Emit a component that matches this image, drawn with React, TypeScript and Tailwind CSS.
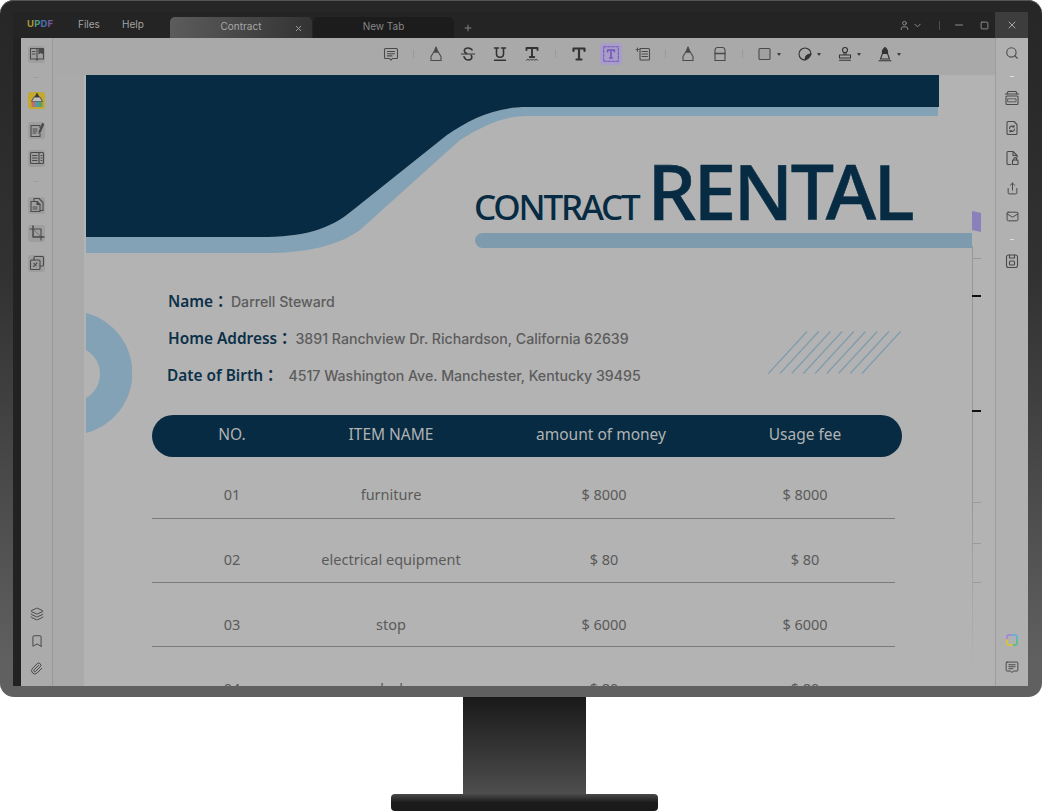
import React from 'react';
import { X, Plus, Minus, Square, ChevronDown, User, Search, Layers, Bookmark, Paperclip, Share, Mail } from 'lucide-react';

const INK = '#4a4a4a';
const DARK = '#333333';

// tiny stroke icon wrapper so all the toolbar glyphs share the same box
const Ico: React.FC<{ children: React.ReactNode; size?: number; color?: string }> = ({ children, size = 16, color = INK }) => (
    <svg width={size} height={size} viewBox="0 0 16 16" fill="none" stroke={color} strokeWidth={1.1} strokeLinecap="round" strokeLinejoin="round">
        {children}
    </svg>
);

const CommentIcon = () => (
    <Ico>
        <path d="M2.500 2.500h11a1 1 0 0 1 1 1v8a1 1 0 0 1-1 1H9.500L8 14.200 6.500 12.500h-4a1 1 0 0 1-1-1v-8a1 1 0 0 1 1-1z" />
        <path d="M4.500 5.500h7M4.500 7.700h7M4.500 9.900h4.500" />
    </Ico>
);
const MarkerIcon = () => (
    <Ico>
        <path d="M3 14.500v-4L5.800 6h4.400L13 10.500v4z" />
        <path d="M6 6l2-5 2 5z" fill={INK} />
    </Ico>
);
const StrikeIcon = () => (
    <Ico color={DARK}>
        <path d="M12 3.800C11 2.600 9.600 2 8 2 6 2 4.300 3 4.300 4.800c0 1.200.8 2 2.200 2.600M4 10.800C4.800 12.800 6.300 14 8.200 14c2 0 3.600-1.100 3.600-3 0-.6-.2-1.200-.5-1.600" strokeWidth={1.600} />
        <path d="M1.500 8h13" strokeWidth={1.200} />
    </Ico>
);
const UnderlineIcon = () => (
    <Ico color={DARK}>
        <path d="M2.500 2h4M9.500 2h4M4.500 2v6c0 2.200 1.400 3.300 3.500 3.300s3.500-1.100 3.500-3.300V2" strokeWidth={1.600} />
        <path d="M2.500 14.300h11" strokeWidth={1.400} />
    </Ico>
);
const SquiggleTIcon = () => (
    <Ico color={DARK}>
        <path d="M2.500 4V2h11v2M8 2v9M5.800 11h4.400" strokeWidth={1.900} />
        <path d="M2.500 14.200l1.400-.9 1.400.9 1.400-.9 1.300.9 1.400-.9 1.400.9 1.400-.9 1.300.9" strokeWidth={0.9} />
    </Ico>
);
const TextIcon = () => (
    <Ico color={DARK}>
        <path d="M2.500 5V2.500h11V5M8 2.500v11M5.500 13.500h5" strokeWidth={2.200} />
    </Ico>
);
const TextBoxIcon = () => (
    <Ico size={18} color="#6f58b8">
        <path d="M1.500 1.500h13v13h-13z" strokeDasharray="2.400 1.200" strokeWidth={0.9} />
        <path d="M5 6V4.500h6V6M8 4.500v7M6.800 11.500h2.400" strokeWidth={1.400} />
    </Ico>
);
const CalloutIcon = () => (
    <Ico>
        <path d="M5 2.500h8.500a1 1 0 0 1 1 1v9.500a1 1 0 0 1-1 1H6a1 1 0 0 1-1-1z" />
        <path d="M7 5.500h5.500M7 8h5.500M7 10.500h5.500" />
        <path d="M1 3.500h3M2.500 2v3.500" strokeWidth={0.9} />
    </Ico>
);
const EraserIcon = () => (
    <Ico>
        <path d="M3 14.500V4.500c0-1.700 1-3 2.500-3h5c1.500 0 2.500 1.300 2.500 3v10z" />
        <path d="M3 7.500h10" strokeWidth={1.700} />
    </Ico>
);
const ShapeIcon = () => (
    <Ico>
        <rect x="2" y="2.500" width="11" height="11" rx="1" fill="#8f8f8f" fillOpacity={0.3} />
    </Ico>
);
const StickerIcon = () => (
    <Ico color={DARK}>
        <path d="M8 14A6 6 0 1 1 14 8c-3.300 0-6 2.700-6 6z" />
        <path d="M8 14c0-3.300 2.700-6 6-6-1 3-3 5-6 6z" fill={DARK} />
    </Ico>
);
const StampIcon = () => (
    <Ico color={DARK}>
        <circle cx="8" cy="4" r="2.500" />
        <path d="M7 6.500v2M9 6.500v2M2.500 9h11v3h-11zM2.500 14.200h11" />
    </Ico>
);
const PenIcon = () => (
    <Ico color={DARK}>
        <path d="M8 1.500c-2 1.500-3 3.500-2.500 6h5c.5-2.500-.5-4.500-2.500-6z" fill={DARK} />
        <path d="M5.500 7.500L3.500 13h9l-2-5.500M2 14.800h12" />
    </Ico>
);

// sidebar icons
const BookIcon = () => (
    <Ico>
        <path d="M1.500 2.500h13v10.500H9L8 14l-1-1H1.500z" />
        <path d="M8 2.500v10.500M3.500 5.500h2.500M3.500 8h2.500" />
        <path d="M10 2.500h3.500v5l-1.750-1.300L10 7.500z" fill={INK} />
    </Ico>
);
const HighlightIcon = () => (
    <svg width="14" height="16" viewBox="0 0 14 16" fill="none">
        <path d="M7 0.500L9.500 5h-5z" fill="#3a3a3a" />
        <path d="M4 5h6l2.500 4.500H1.500z" fill="#bdbdbd" stroke="#3a3a3a" strokeWidth={0.8} />
        <rect x="1.500" y="9.500" width="3.700" height="5.500" fill="#b96f6f" />
        <rect x="5.200" y="9.500" width="3.700" height="5.500" fill="#4f9aa8" />
        <rect x="8.900" y="9.500" width="3.600" height="5.500" fill="#5aa06a" />
    </svg>
);
const EditDocIcon = () => (
    <Ico>
        <path d="M11 5.500V3.500H2v11h9v-3" />
        <path d="M4 7h4M4 9h4M4 11h3" />
        <path d="M13.500 1.500L10.500 9l-.5 2 1.500-1.500 3-7z" fill={INK} />
    </Ico>
);
const ReaderIcon = () => (
    <Ico>
        <rect x="1.500" y="2.500" width="13" height="11" rx="1" />
        <path d="M10 2.500v11M3.500 5.500h4.500M3.500 8h4.500M3.500 10.500h4.500M12 5.500h1M12 8h1M12 10.500h1" />
    </Ico>
);
const PagesIcon = () => (
    <Ico>
        <path d="M5 3.500V1.500h5l4 4v8h-3" />
        <path d="M2 4.500h6l3 3v7H2z" />
        <path d="M8 4.500v3h3" fill={INK} />
        <path d="M4 10h4M4 12h4" />
    </Ico>
);
const CropIcon = () => (
    <Ico>
        <path d="M4 1v11h11" strokeWidth={1.500} />
        <path d="M1 4h11v11" strokeWidth={1.100} />
        <path d="M4 4l8 8" strokeWidth={0.5} />
    </Ico>
);
const StackIcon = () => (
    <Ico>
        <rect x="1.500" y="5" width="9.500" height="9.500" rx="1" />
        <path d="M5 5V2.500a1 1 0 0 1 1-1h7.500a1 1 0 0 1 1 1V10a1 1 0 0 1-1 1H11" />
        <path d="M4.500 11.500l3.500-3.500M5 8.500l2.500 2.500" strokeDasharray="1 1" />
    </Ico>
);
const OcrIcon = () => (
    <Ico>
        <path d="M3 4l1-2.500h8L13 4" />
        <path d="M1.500 4h13" />
        <rect x="2" y="6" width="12" height="8.500" rx="1" />
        <path d="M4 8.800h8v3H4z" strokeWidth={0.8} />
    </Ico>
);
const ConvertIcon = () => (
    <Ico>
        <path d="M10 1.500H4a1 1 0 0 0-1 1v11a1 1 0 0 0 1 1h8a1 1 0 0 0 1-1V4.500z" />
        <path d="M5.500 8.500A2.500 2.500 0 0 1 10 7M10.500 9A2.500 2.500 0 0 1 6 10.500M10 5.500V7H8.500M6 12v-1.500h1.500" />
    </Ico>
);
const LockDocIcon = () => (
    <Ico>
        <path d="M7 14.500H4a1 1 0 0 1-1-1v-11a1 1 0 0 1 1-1h5l4 4v2" />
        <path d="M9 1.500v4h4" />
        <rect x="8.500" y="10" width="5.500" height="4.500" rx="0.5" />
        <path d="M9.800 10V9a1.400 1.400 0 0 1 2.800 0v1" />
    </Ico>
);
const SaveIcon = () => (
    <Ico>
        <rect x="2.500" y="2" width="11" height="12.500" rx="2" />
        <path d="M5.500 2v3h5V2" />
        <rect x="5.500" y="8" width="5" height="4" rx="1" />
    </Ico>
);
const AiIcon = () => (
    <svg width="14" height="14" viewBox="0 0 14 14" fill="none" strokeWidth={2} strokeLinecap="round">
        <path d="M2 7V4a2 2 0 0 1 2-2h3" stroke="#a58ad8" />
        <path d="M7 2h3a2 2 0 0 1 2 2v3" stroke="#6ab0d8" />
        <path d="M12 7v3a2 2 0 0 1-2 2H7" stroke="#62bb8c" />
        <path d="M7 12H4a2 2 0 0 1-2-2V7" stroke="#d6c04c" />
    </svg>
);

const IconTile: React.FC<{ children: React.ReactNode; className?: string; bg?: string }> = ({ children, className = '', bg = 'bg-[#9e9e9e]' }) => (
    <div className={`w-[17px] h-[17px] my-[1.500px] rounded-[3px] flex items-center justify-center ${bg} ${className}`}>{children}</div>
);

const Slot: React.FC<{ children: React.ReactNode; className?: string }> = ({ children, className = '' }) => (
    <div className={`h-[20px] flex items-center justify-center ${className}`}>{children}</div>
);

const ToolBtn: React.FC<{ children: React.ReactNode }> = ({ children }) => (
    <div className="w-[32px] flex items-center justify-center shrink-0">{children}</div>
);
const ToolDrop: React.FC<{ children: React.ReactNode }> = ({ children }) => (
    <div className="w-[40px] pl-[8px] flex items-center shrink-0">
        {children}
        <span className="ml-[4px] w-0 h-0 border-x-[2.500px] border-x-transparent border-t-[3px] border-t-[#3f3f3f]" />
    </div>
);
const ToolSep: React.FC<{ className?: string }> = ({ className = 'w-[13px]' }) => (
    <div className={`flex justify-center shrink-0 ${className}`}>
        <div className="w-[1px] h-[8px] bg-[#9a9a9a]" />
    </div>
);

const TitleBar = () => (
    <div className="h-[26px] shrink-0 bg-[#242424] flex items-end text-[10px] font-['Inter',sans-serif]">
        <div className="w-[157px] h-full flex items-center pl-[14px] shrink-0 pb-[2px]">
            <span className="font-bold text-[9.500px] tracking-[0.2px] w-[51px]">
                <span className="text-[#b09a2e]">U</span>
                <span className="text-[#4a9a88]">P</span>
                <span className="text-[#4a70b0]">D</span>
                <span className="text-[#7a58a0]">F</span>
            </span>
            <span className="text-[#a3a3a3] w-[44px]">Files</span>
            <span className="text-[#a3a3a3]">Help</span>
        </div>
        <div className="w-[142px] h-[21px] mr-[1px] pb-[2px] rounded-t-[5px] bg-gradient-to-r from-[#5c5c5c] to-[#333333] relative flex items-center justify-center text-[#a8a8a8] shrink-0">
            Contract
            <X className="absolute right-[9px] top-[7px] text-[#9a9a9a]" size={9} strokeWidth={1} absoluteStrokeWidth />
        </div>
        <div className="w-[141px] h-[21px] pb-[2px] rounded-t-[5px] bg-[#1c1c1c] flex items-center justify-center text-[#868686] shrink-0">New Tab</div>
        <Plus className="ml-[9px] mb-[5px] text-[#808080]" size={10} strokeWidth={1} absoluteStrokeWidth />
        <div className="ml-auto h-full flex items-center text-[#8a8a8a]">
            <User size={11} strokeWidth={1} absoluteStrokeWidth />
            <ChevronDown className="ml-[2px]" size={11} strokeWidth={1} absoluteStrokeWidth />
            <div className="w-[1px] h-[9px] bg-[#4d4d4d] ml-[16px]" />
            <Minus className="ml-[13px]" size={12} strokeWidth={1} absoluteStrokeWidth />
            <Square className="ml-[15px] mr-[5px]" size={9} strokeWidth={1} absoluteStrokeWidth />
            <div className="ml-[1px] w-[33px] h-full bg-[#3d3d3d] flex items-center justify-center">
                <X className="text-[#a8a8a8]" size={12} strokeWidth={1} absoluteStrokeWidth />
            </div>
        </div>
    </div>
);

const LeftBar = () => (
    <div className="w-[32px] shrink-0 bg-[#ababab] border-r border-[#999999] flex flex-col items-center pt-[6px] pb-[8px]">
        <Slot><IconTile><BookIcon /></IconTile></Slot>
        <div className="mt-[13px] w-[5px] h-[1px] bg-[#9c9c9c]" />
        <Slot className="mt-[12px]"><IconTile bg="bg-[#c5a92f]"><HighlightIcon /></IconTile></Slot>
        <Slot className="mt-[10px]"><IconTile><EditDocIcon /></IconTile></Slot>
        <Slot className="mt-[8px]"><IconTile><ReaderIcon /></IconTile></Slot>
        <div className="mt-[13px] w-[5px] h-[1px] bg-[#9c9c9c]" />
        <Slot className="mt-[13px]"><IconTile><PagesIcon /></IconTile></Slot>
        <Slot className="mt-[8px]"><IconTile><CropIcon /></IconTile></Slot>
        <Slot className="mt-[10px]"><IconTile><StackIcon /></IconTile></Slot>
        <Slot className="mt-auto"><Layers className="text-[#4a4a4a]" size={14} strokeWidth={1} absoluteStrokeWidth /></Slot>
        <Slot className="mt-[7px]"><Bookmark className="text-[#4a4a4a]" size={14} strokeWidth={1} absoluteStrokeWidth /></Slot>
        <Slot className="mt-[7px]"><Paperclip className="text-[#4a4a4a]" size={13} strokeWidth={1} absoluteStrokeWidth /></Slot>
    </div>
);

const RightBar = () => (
    <div className="w-[33px] shrink-0 bg-[#b1b1b1] border-l border-[#9d9d9d] flex flex-col items-center pt-[5px] pb-[9px]">
        <Slot><Search className="text-[#4a4a4a]" size={14} strokeWidth={1.100} absoluteStrokeWidth /></Slot>
        <div className="mt-[13px] w-[4px] h-[1px] bg-[#dcdcdc]" />
        <Slot className="mt-[11px]"><OcrIcon /></Slot>
        <Slot className="mt-[10px]"><ConvertIcon /></Slot>
        <Slot className="mt-[10px]"><LockDocIcon /></Slot>
        <Slot className="mt-[10px]"><Share className="text-[#4a4a4a]" size={13} strokeWidth={1} absoluteStrokeWidth /></Slot>
        <Slot className="mt-[8px]"><Mail className="text-[#4a4a4a]" size={13} strokeWidth={1} absoluteStrokeWidth /></Slot>
        <div className="mt-[13px] w-[4px] h-[1px] bg-[#dcdcdc]" />
        <Slot className="mt-[11px]"><SaveIcon /></Slot>
        <Slot className="mt-auto"><AiIcon /></Slot>
        <Slot className="mt-[7px] scale-90"><CommentIcon /></Slot>
    </div>
);

const Toolbar = () => (
    <div className="h-[37px] shrink-0 bg-[#a9a9a9] flex items-center pl-[322px] pb-[5px]">
        <ToolBtn><CommentIcon /></ToolBtn>
        <ToolSep />
        <ToolBtn><MarkerIcon /></ToolBtn>
        <ToolBtn><StrikeIcon /></ToolBtn>
        <ToolBtn><UnderlineIcon /></ToolBtn>
        <ToolBtn><SquiggleTIcon /></ToolBtn>
        <ToolSep className="w-[15px]" />
        <ToolBtn><TextIcon /></ToolBtn>
        <ToolBtn>
            <div className="w-[22px] h-[22px] rounded-[3px] bg-[#a99cc9] flex items-center justify-center">
                <TextBoxIcon />
            </div>
        </ToolBtn>
        <ToolBtn><CalloutIcon /></ToolBtn>
        <ToolSep />
        <ToolBtn><MarkerIcon /></ToolBtn>
        <ToolBtn><EraserIcon /></ToolBtn>
        <ToolSep />
        <ToolDrop><ShapeIcon /></ToolDrop>
        <ToolDrop><StickerIcon /></ToolDrop>
        <ToolDrop><StampIcon /></ToolDrop>
        <ToolDrop><PenIcon /></ToolDrop>
    </div>
);

const rows = [
    { no: '01', item: 'furniture', amount: '$ 8000', fee: '$ 8000' },
    { no: '02', item: 'electrical equipment', amount: '$ 80', fee: '$ 80' },
    { no: '03', item: 'stop', amount: '$ 6000', fee: '$ 6000' },
    { no: '04', item: 'desk', amount: '$ 80', fee: '$ 80' }
];

const Header = () => (
    <div className="relative h-[178px]">
        <svg className="absolute left-0 top-0" width="911" height="178" viewBox="0 0 911 178">
            <path d="M2 162H176C220 162 245 155 269 135L363 60C385 45 410 32 443 32H854V41H443C420 41 400 50 376 65L276 155C255 170 225 178 180 178H2Z" fill="#84a2b5" />
            <path d="M2 0H855V32H443C410 32 385 45 363 60L269 135C245 155 220 162 176 162H2Z" fill="#062b43" />
        </svg>
        <div className="relative pl-[391px] pt-[81px]">
            <div className="h-[70px] flex items-baseline leading-[70px] text-[#062b43] font-medium whitespace-nowrap">
                <span className="text-[35px] tracking-[-2.200px] -ml-[1px]">CONTRACT</span>
                <span className="text-[77px] tracking-[-2.700px] ml-[9px] [-webkit-text-stroke:0.6px_#062b43]">RENTAL</span>
            </div>
            <div className="mt-[7px] h-[15px] w-[497px] rounded-l-full bg-[#7e9bad]" />
        </div>
    </div>
);

const InfoRow: React.FC<{ label: string; value: string; className?: string; valueClass?: string }> = ({ label, value, className = '', valueClass = '' }) => (
    <div className={`h-[37px] flex items-center whitespace-nowrap ${className}`}>
        <span className="text-[15.400px] font-semibold text-[#0b3048] font-['Noto_Sans','Noto_Sans_CJK_TC',sans-serif]">{label}：</span>
        <span className={`text-[14.150px] font-medium text-[#5c5c5c] font-['Inter',sans-serif] ${valueClass}`}>{value}</span>
    </div>
);

const Body = () => (
    <div className="relative">
        <svg className="absolute left-[2px] top-[60px]" width="46" height="120" viewBox="0 0 46 120">
            <path d="M0 0A62 62 0 0 1 0 120V85A27.600 27.600 0 0 0 0 37Z" fill="#84a2b5" />
        </svg>
        <svg className="absolute left-[684px] top-[78px]" width="134" height="43" viewBox="0 0 134 43" stroke="#7f9bad" strokeWidth={1.200}>
            {[0, 1, 2, 3, 4, 5, 6, 7, 8].map(i => (
                <line key={i} x1={0.3 + i * 11.7} y1={42.5} x2={39 + i * 11.7} y2={0.5} />
            ))}
        </svg>
        <div className="pt-[30px] pl-[84px]">
            <InfoRow label="Name" value="Darrell Steward" valueClass="ml-[2.500px]" />
            <InfoRow label="Home Address" value="3891 Ranchview Dr. Richardson, California 62639" valueClass="ml-[3px]" />
            <InfoRow label="Date of Birth" value="4517 Washington Ave. Manchester, Kentucky 39495" className="-ml-[1px]" valueClass="ml-[10px]" />
        </div>
        <div className="ml-[68px] mt-[21px] w-[750px]">
            <div className="h-[42px] pb-[2px] rounded-full bg-[#062b43] grid grid-cols-[160px_158px_268px_134px] items-center text-center text-[15.500px] text-[#b2b2b2]">
                <span>NO.</span>
                <span>ITEM NAME</span>
                <span className="pr-[6px]">amount of money</span>
                <span>Usage fee</span>
            </div>
            {rows.map((r, i) => (
                <div
                    key={r.no}
                    className={`w-[743px] grid grid-cols-[160px_158px_268px_134px] items-center text-center text-[14.500px] text-[#5a5a5a] ${i === 0 ? 'h-[62px] pt-[14px]' : i === 1 ? 'h-[64px] pt-[18px]' : 'h-[64px] pt-[20px]'} ${i < 3 ? 'border-b-[1.500px] border-[#7b7b7b]' : ''}`}
                >
                    <span>{r.no}</span>
                    <span>{r.item}</span>
                    <span>{r.amount}</span>
                    <span>{r.fee}</span>
                </div>
            ))}
        </div>
    </div>
);

// ruler + purple tab at the page's right edge
const EdgeMarks = () => (
    <svg className="absolute left-[888px] top-[136px]" width="12" height="470" viewBox="0 0 12 470" fill="none">
        <defs>
            <linearGradient id="fadeLine" x1="0" y1="0" x2="0" y2="1">
                <stop offset="0" stopColor="#979797" />
                <stop offset="0.6" stopColor="#979797" />
                <stop offset="1" stopColor="#979797" stopOpacity={0} />
            </linearGradient>
        </defs>
        <path d="M0 0L9 2V21L0 19Z" fill="#8a80bb" />
        <rect x="0" y="35" width="1" height="428" fill="url(#fadeLine)" />
        <rect x="0" y="47" width="9" height="1" fill="#979797" />
        <rect x="0" y="84" width="9" height="2" fill="#111111" />
        <rect x="0" y="199" width="9" height="2" fill="#111111" />
        <rect x="0" y="291" width="9" height="1" fill="#9a9a9a" />
        <rect x="0" y="332" width="9" height="1" fill="#9a9a9a" />
        <rect x="0" y="371" width="9" height="1" fill="#9a9a9a" />
    </svg>
);

export default function App() {
    return (
        <div className="w-[1042px] h-[811px] bg-white flex flex-col items-center overflow-hidden font-['Noto_Sans','Noto_Sans_CJK_SC',sans-serif]">
            <div className="w-full h-[697px] shrink-0 rounded-[14px] bg-gradient-to-b from-[#262626] via-[#323232] via-40% to-[#606060] to-95% pt-[12px] pl-[13px] pr-[14px] pb-[11px] shadow-[inset_0_1px_0_#555555]">
                <div className="h-full flex flex-col overflow-hidden">
                    <TitleBar />
                    <div className="flex-1 min-h-0 flex bg-[#222222] pl-[8px]">
                        <LeftBar />
                        <div className="flex-1 min-w-0 flex flex-col">
                            <Toolbar />
                            <div className="flex-1 min-h-0 flex">
                                <div className="w-[31px] shrink-0 bg-[#aaaaaa]" />
                                <div className="relative flex-1 min-w-0 bg-[#b3b3b3] overflow-hidden">
                                    <Header />
                                    <Body />
                                    <EdgeMarks />
                                </div>
                            </div>
                        </div>
                        <RightBar />
                    </div>
                </div>
            </div>
            <div className="w-[123px] h-[97px] ml-[7px] shrink-0 bg-gradient-to-b from-[#1a1a1a] to-[#4e4e4e]" />
            <div className="w-[267px] h-[17px] ml-[7px] shrink-0 rounded-[4px] bg-gradient-to-b from-[#4a4a4a] via-[#1c1c1c] to-[#1a1a1a]" />
        </div>
    );
}
